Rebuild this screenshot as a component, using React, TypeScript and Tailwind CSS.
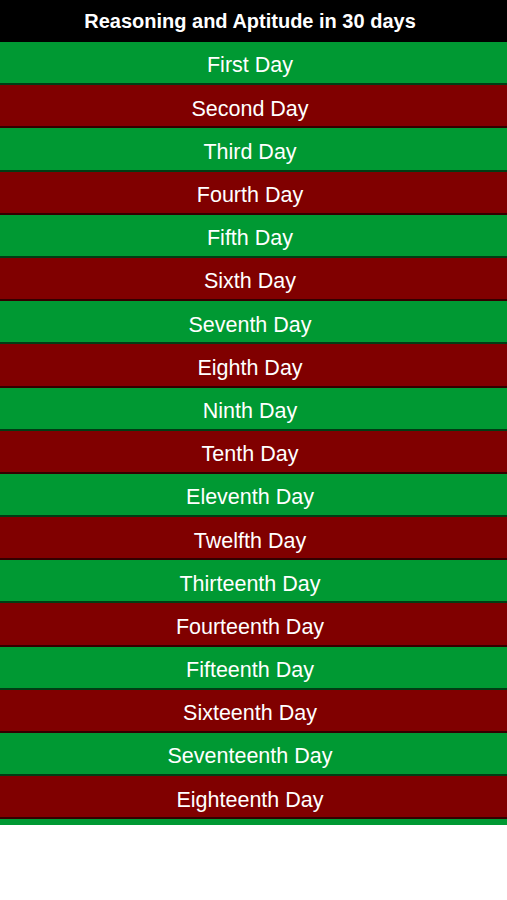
const days = [
  "First", "Second", "Third", "Fourth", "Fifth", "Sixth", "Seventh", "Eighth", "Ninth",
  "Tenth", "Eleventh", "Twelfth", "Thirteenth", "Fourteenth", "Fifteenth", "Sixteenth",
  "Seventeenth", "Eighteenth",
]

export default function App() {
  return (
    <div className="min-h-screen w-full bg-white font-['Liberation_Sans',Arial,sans-serif]">
      <div className="h-[42px] bg-black flex items-center justify-center pr-[7px] text-white font-bold text-[20px]">
        Reasoning and Aptitude in 30 days
      </div>
      <div className="flex flex-col">
        {days.map((d, i) => (
          <div
            key={d}
            className={
              "h-[43.2px] flex items-center justify-center pt-[6px] pr-[7px] border-b-2 border-black/60 text-white text-[21.5px] " +
              (i % 2 === 0 ? "bg-[#009933]" : "bg-[#800000]")
            }
          >
            {d} Day
          </div>
        ))}
        {/* next row peeking out at the bottom */}
        <div className="h-[6px] bg-[#009933]" />
      </div>
    </div>
  )
}
